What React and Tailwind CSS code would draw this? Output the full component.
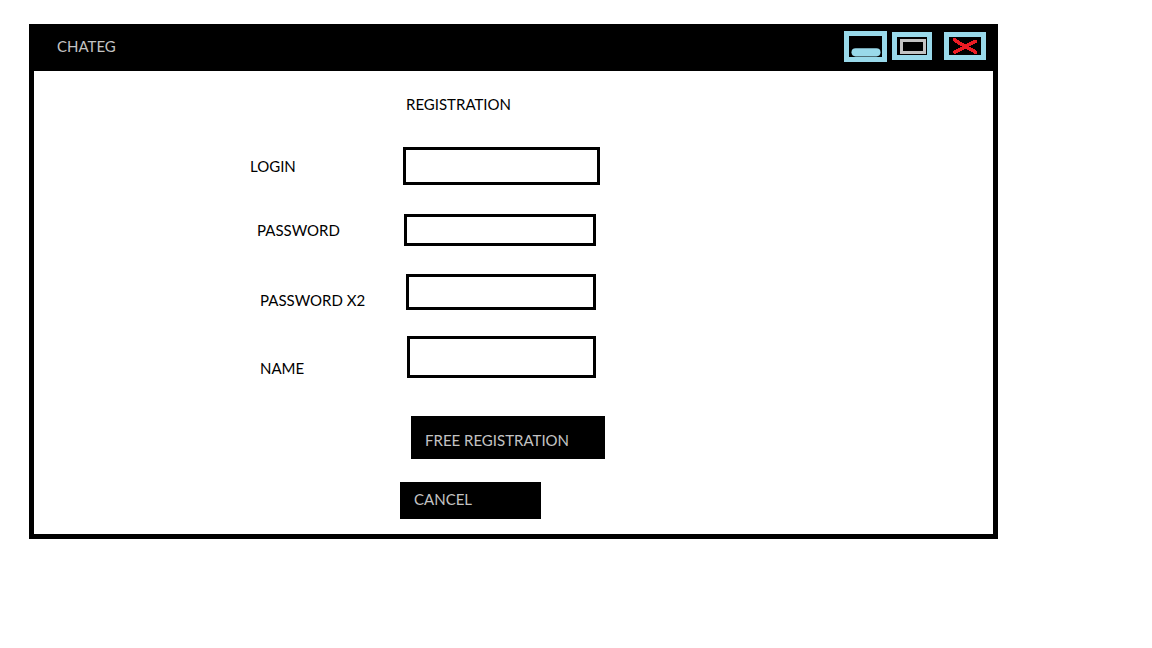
const fields = [
  { id: 'login', label: 'LOGIN', type: 'text', row: 'mt-[33px] items-center pl-[216px]', labelWidth: 'w-[153px]', box: 'h-[38px] w-[197px]' },
  { id: 'password', label: 'PASSWORD', type: 'password', row: 'mt-[29px] items-center pl-[223px]', labelWidth: 'w-[147px]', box: 'h-[32px] w-[192px]' },
  { id: 'password2', label: 'PASSWORD X2', type: 'password', row: 'mt-[28px] items-end pl-[226px]', labelWidth: 'w-[146px]', box: 'h-[36px] w-[190px]' },
  { id: 'name', label: 'NAME', type: 'text', row: 'mt-[26px] items-end pl-[226px]', labelWidth: 'w-[147px]', box: 'h-[42px] w-[189px]' },
];

function TitleBar() {
  return (
    <header className="flex h-[42px] items-center bg-black pr-[7px] pb-2 pl-[23px] text-[#c3c3c3]">
      <span className="flex-1">CHATEG</span>
      <button type="button" aria-label="Minimize">
        <svg className="block" width="43" height="32" viewBox="0 0 43 32">
          <rect x="2.5" y="3.5" width="38" height="26" fill="none" stroke="#99d9ea" strokeWidth="5" />
          <rect x="7.5" y="18.2" width="29" height="8.2" rx="4.1" fill="#99d9ea" />
        </svg>
      </button>
      <button type="button" aria-label="Maximize" className="ml-[5px]">
        <svg className="block" width="40" height="28" viewBox="0 0 40 28">
          <rect x="2.5" y="2.5" width="35" height="23" fill="none" stroke="#99d9ea" strokeWidth="5" />
          <rect x="9.5" y="8.5" width="23" height="12" fill="none" stroke="#c3c3c3" strokeWidth="3" />
        </svg>
      </button>
      <button type="button" aria-label="Close" className="ml-3">
        <svg className="block" width="42" height="28" viewBox="0 0 42 28">
          <rect x="2.5" y="2.5" width="37" height="23" fill="none" stroke="#99d9ea" strokeWidth="5" />
          <path d="M10.5 8L17 12L25 16.5L31.5 20M31.5 9.5L25 12.5L18 16.5L11 20" fill="none" stroke="#ed1c24" strokeWidth="3.6" strokeLinecap="round" shapeRendering="crispEdges" />
        </svg>
      </button>
    </header>
  );
}

export default function App() {
  return (
    <div className="min-h-screen bg-white pt-6 pr-[154px] pl-[29px] font-['Lato',sans-serif] text-[15px] leading-5 text-black">
      <main className="border-[5px] border-black bg-white">
        <TitleBar />
        <form className="pt-[23px] pb-[15px]" onSubmit={(e) => e.preventDefault()}>
          <h1 className="pl-[372px]">REGISTRATION</h1>
          {fields.map((f) => (
            <div key={f.id} className={`flex ${f.row}`}>
              <label htmlFor={f.id} className={`shrink-0 ${f.labelWidth}`}>{f.label}</label>
              <input id={f.id} type={f.type} className={`border-[3px] border-black bg-white px-2 outline-none ${f.box}`} />
            </div>
          ))}
          <div className="mt-[38px] pl-[377px]">
            <button type="submit" className="block h-[43px] w-[194px] bg-black pt-1 pl-3.5 text-left text-[#c3c3c3]">FREE REGISTRATION</button>
          </div>
          <div className="mt-[23px] pl-[366px]">
            <button type="button" className="block h-[37px] w-[141px] bg-black pb-1 pl-3.5 text-left text-[#c3c3c3]">CANCEL</button>
          </div>
        </form>
      </main>
    </div>
  );
}
